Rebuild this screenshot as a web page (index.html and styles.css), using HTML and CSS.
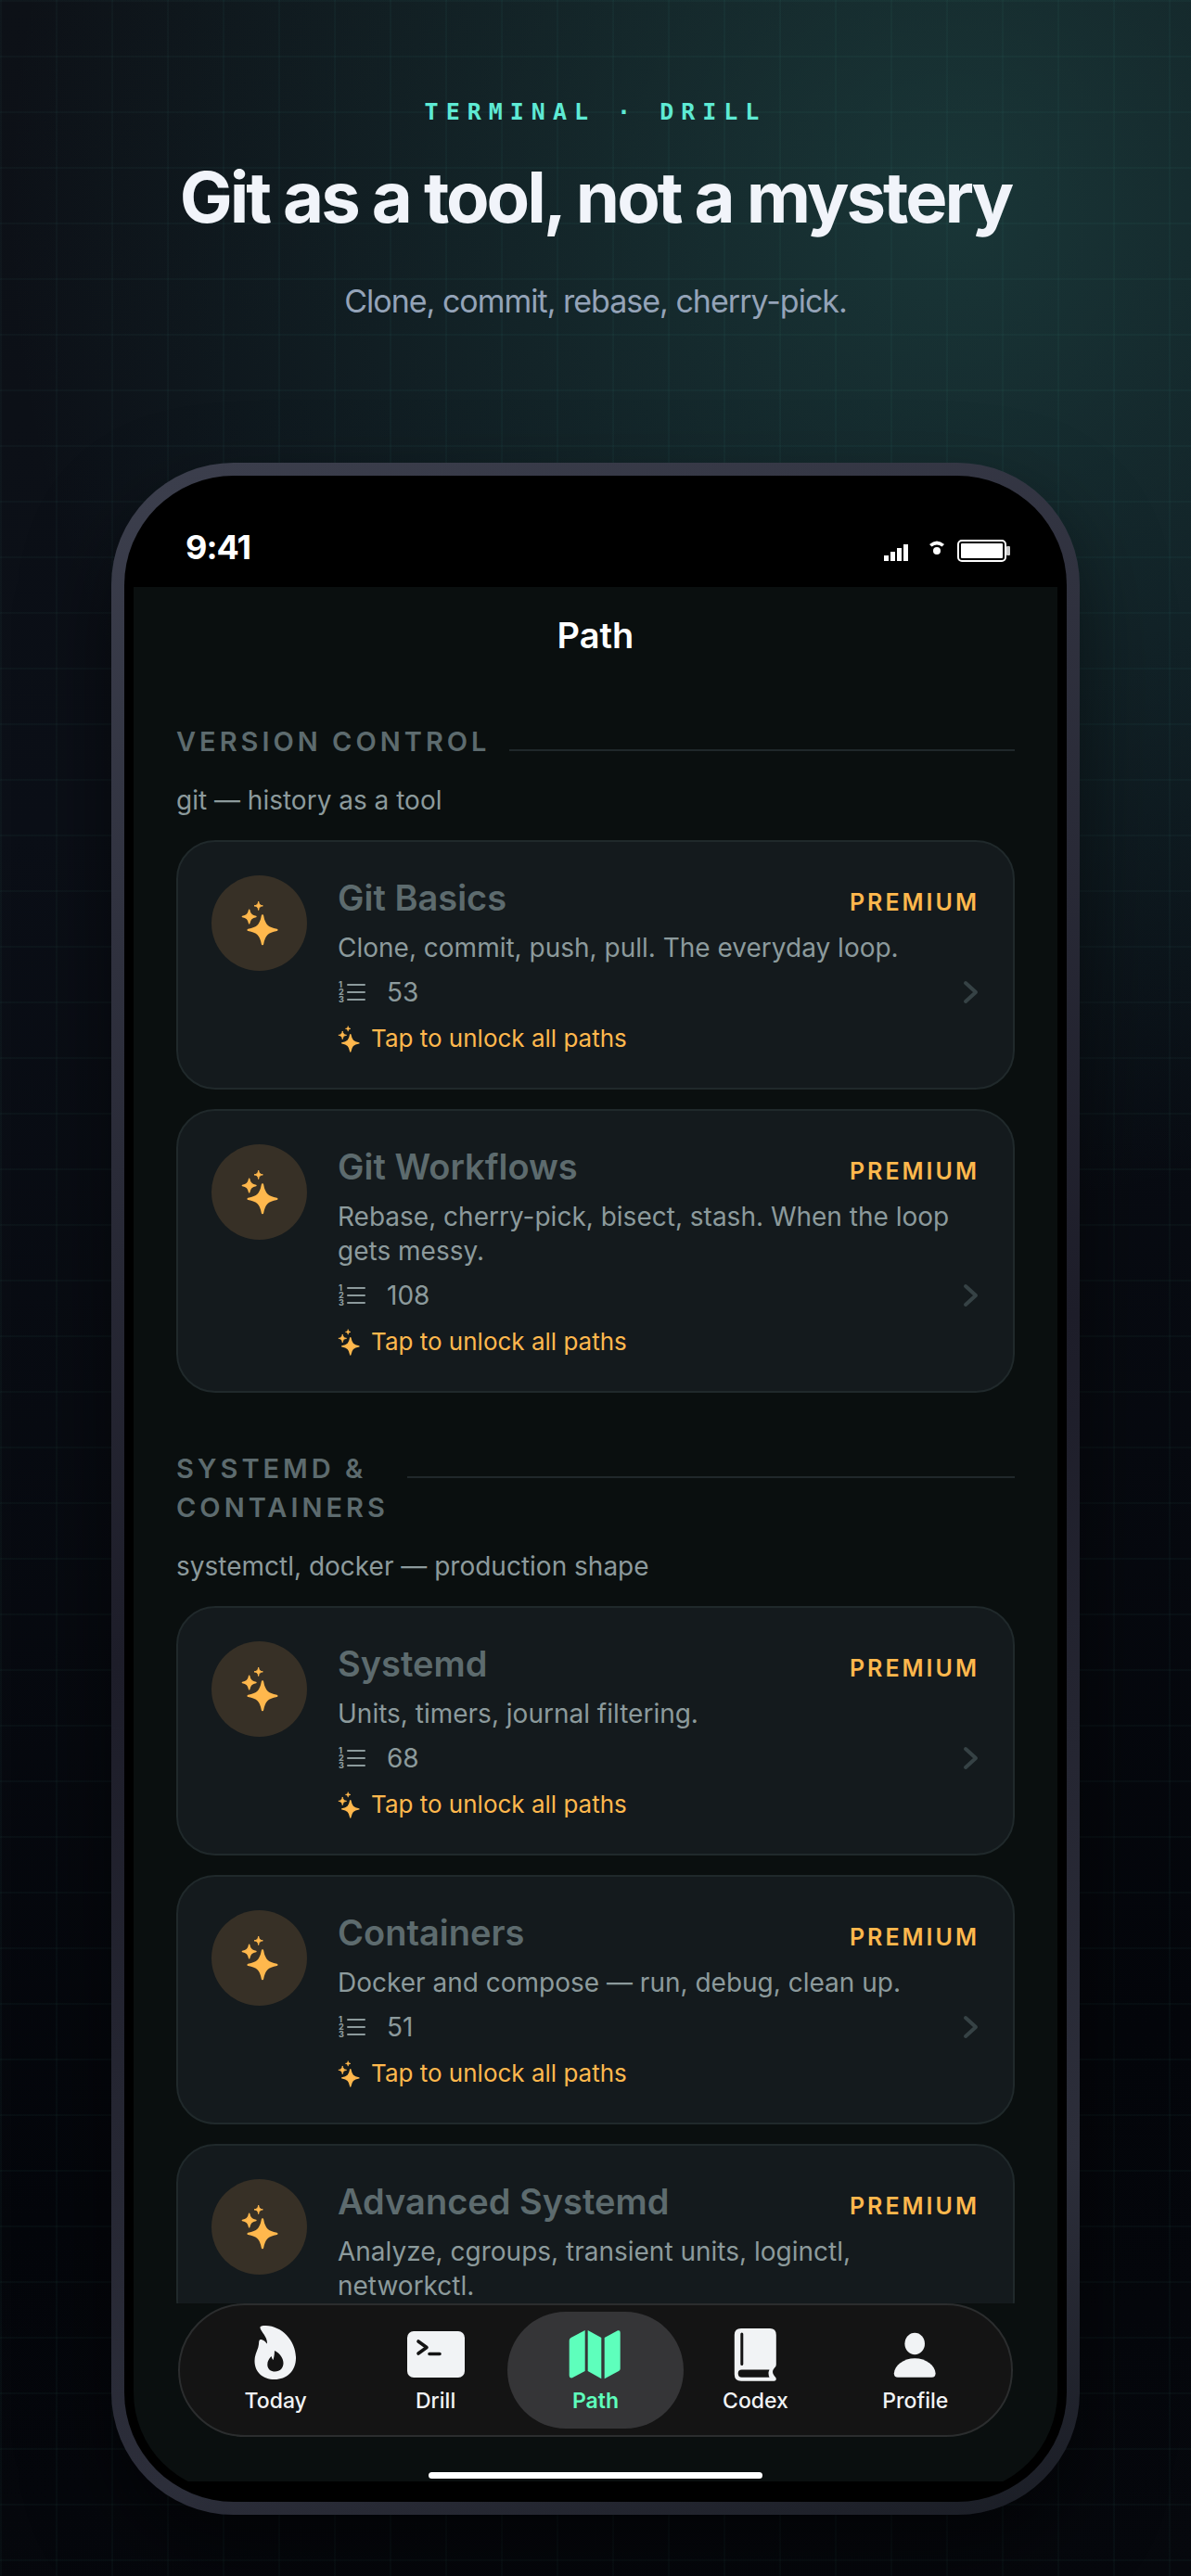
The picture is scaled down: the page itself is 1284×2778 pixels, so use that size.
FILE: index.html
```html
<!DOCTYPE html>
<html lang="en">
  <head>
    <meta charset="UTF-8" />
    <meta name="viewport" content="width=device-width, initial-scale=1.0" />
    <title>Terminal Drill - Path</title>
    <link rel="stylesheet" href="styles.css" />
  </head>
  <body>
    <!-- shared icons -->
    <svg class="sprite" aria-hidden="true">
      <symbol id="sparkles" viewBox="118 93 120 146">
        <g fill="currentColor" stroke="currentColor" stroke-linejoin="round">
          <path stroke-width="7" d="M187 142C192 172 203 183 233 188C203 193 192 204 187 234C182 204 171 193 141 188C171 183 182 172 187 142Z" />
          <path stroke-width="4" d="M144 123C146 137 152 143 166 145C152 147 146 153 144 167C142 153 136 147 122 145C136 143 142 137 144 123Z" />
          <path stroke-width="3" d="M174 96C175 105 179 109 188 110C179 111 175 115 174 124C173 115 169 111 160 110C169 109 173 105 174 96Z" />
        </g>
      </symbol>
      <symbol id="chevron" viewBox="0 0 18 26">
        <path d="M3 3L14 13L3 23" fill="none" stroke="currentColor" stroke-width="4" stroke-linecap="round" stroke-linejoin="round" />
      </symbol>
    </svg>

    <header class="hero">
      <p class="eyebrow">TERMINAL · DRILL</p>
      <h1>Git as a tool, not a mystery</h1>
      <p class="tagline">Clone, commit, rebase, cherry-pick.</p>
    </header>

    <div class="phone">
      <div class="bezel">
        <div class="glass">
          <div class="status-bar">
            <span class="time">9:41</span>
            <div class="status-icons">
              <svg width="28" height="24" viewBox="0 0 28 24" fill="#fff">
                <path d="M0 17h5v6H0zM7 13h5v10H7zM14 9h5v14h-5zM21 5h5v18h-5z" />
              </svg>
              <svg width="18" height="24" viewBox="0 0 18 24" fill="#fff">
                <path d="M1 5Q9 -2 17 5L14.500 7.500Q9 3.500 3.500 7.500Z" />
                <circle cx="9" cy="12" r="4" />
              </svg>
              <svg width="57" height="24" viewBox="0 0 57 24">
                <rect x="1" y="1" width="51" height="22" rx="4" fill="none" stroke="#fff" stroke-width="2" />
                <rect x="4" y="4" width="45" height="16" rx="1" fill="#fff" />
                <rect x="53" y="7" width="4" height="10" rx="1" fill="#ccc" />
              </svg>
            </div>
          </div>

          <main class="screen">
            <div class="list">
              <h2 class="page-title">Path</h2>

              <section>
                <div class="section-head">
                  <h3>VERSION CONTROL</h3>
                  <span class="rule"></span>
                </div>
                <p class="section-note">git — history as a tool</p>

                <a class="card" href="#">
                  <span class="badge"><svg class="badge-icon"><use href="#sparkles" /></svg></span>
                  <div class="card-body">
                    <div class="card-top">
                      <h4>Git Basics</h4>
                      <span class="premium">PREMIUM</span>
                    </div>
                    <p class="desc">Clone, commit, push, pull. The everyday loop.</p>
                    <div class="meta">
                      <svg class="list-icon" viewBox="0 0 30 26">
                        <path d="M11 5H29M11 13H29M11 21H29" />
                        <text x="1" y="8">1</text>
                        <text x="1" y="16">2</text>
                        <text x="1" y="24">3</text>
                      </svg>
                      <span>53</span>
                      <svg class="chevron"><use href="#chevron" /></svg>
                    </div>
                    <div class="unlock">
                      <svg class="unlock-icon"><use href="#sparkles" /></svg>
                      <span>Tap to unlock all paths</span>
                    </div>
                  </div>
                </a>

                <a class="card" href="#">
                  <span class="badge"><svg class="badge-icon"><use href="#sparkles" /></svg></span>
                  <div class="card-body">
                    <div class="card-top">
                      <h4>Git Workflows</h4>
                      <span class="premium">PREMIUM</span>
                    </div>
                    <p class="desc">Rebase, cherry-pick, bisect, stash. When the loop gets messy.</p>
                    <div class="meta">
                      <svg class="list-icon" viewBox="0 0 30 26">
                        <path d="M11 5H29M11 13H29M11 21H29" />
                        <text x="1" y="8">1</text>
                        <text x="1" y="16">2</text>
                        <text x="1" y="24">3</text>
                      </svg>
                      <span>108</span>
                      <svg class="chevron"><use href="#chevron" /></svg>
                    </div>
                    <div class="unlock">
                      <svg class="unlock-icon"><use href="#sparkles" /></svg>
                      <span>Tap to unlock all paths</span>
                    </div>
                  </div>
                </a>
              </section>

              <section>
                <div class="section-head">
                  <h3>SYSTEMD &amp;<br />CONTAINERS</h3>
                  <span class="rule"></span>
                </div>
                <p class="section-note">systemctl, docker — production shape</p>

                <a class="card" href="#">
                  <span class="badge"><svg class="badge-icon"><use href="#sparkles" /></svg></span>
                  <div class="card-body">
                    <div class="card-top">
                      <h4>Systemd</h4>
                      <span class="premium">PREMIUM</span>
                    </div>
                    <p class="desc">Units, timers, journal filtering.</p>
                    <div class="meta">
                      <svg class="list-icon" viewBox="0 0 30 26">
                        <path d="M11 5H29M11 13H29M11 21H29" />
                        <text x="1" y="8">1</text>
                        <text x="1" y="16">2</text>
                        <text x="1" y="24">3</text>
                      </svg>
                      <span>68</span>
                      <svg class="chevron"><use href="#chevron" /></svg>
                    </div>
                    <div class="unlock">
                      <svg class="unlock-icon"><use href="#sparkles" /></svg>
                      <span>Tap to unlock all paths</span>
                    </div>
                  </div>
                </a>

                <a class="card" href="#">
                  <span class="badge"><svg class="badge-icon"><use href="#sparkles" /></svg></span>
                  <div class="card-body">
                    <div class="card-top">
                      <h4>Containers</h4>
                      <span class="premium">PREMIUM</span>
                    </div>
                    <p class="desc">Docker and compose — run, debug, clean up.</p>
                    <div class="meta">
                      <svg class="list-icon" viewBox="0 0 30 26">
                        <path d="M11 5H29M11 13H29M11 21H29" />
                        <text x="1" y="8">1</text>
                        <text x="1" y="16">2</text>
                        <text x="1" y="24">3</text>
                      </svg>
                      <span>51</span>
                      <svg class="chevron"><use href="#chevron" /></svg>
                    </div>
                    <div class="unlock">
                      <svg class="unlock-icon"><use href="#sparkles" /></svg>
                      <span>Tap to unlock all paths</span>
                    </div>
                  </div>
                </a>

                <a class="card" href="#">
                  <span class="badge"><svg class="badge-icon"><use href="#sparkles" /></svg></span>
                  <div class="card-body">
                    <div class="card-top">
                      <h4>Advanced Systemd</h4>
                      <span class="premium">PREMIUM</span>
                    </div>
                    <p class="desc">Analyze, cgroups, transient units, loginctl, networkctl.</p>
                  </div>
                </a>
              </section>
            </div>

            <nav class="tabs">
              <a class="tab" href="#">
                <svg class="tab-icon" viewBox="0 0 66 62">
                  <path fill="currentColor" fill-rule="evenodd" d="M16.500 4.500C16 2.800 18 2 22.500 2C40 2.500 55 18 55 37C55 51 45 60 32 60C19 60 10.500 52 10.500 40C10.500 32 14.500 28 15 22C15.200 17 16 16.500 19 17.500C21.500 18.500 22.500 20 24 21.500C24.500 14 17.500 9 16.500 4.500ZM32 29C32 32 31.500 36 30.500 39C29.500 38 29 36.500 28.500 35C26 38 24.300 40 24.300 44C24.300 49 28 51.500 32.500 51.500C38 51.500 41.500 47.500 41.500 42.500C41.500 37 37 31 32 29Z" />
                </svg>
                <span>Today</span>
              </a>
              <a class="tab" href="#">
                <svg class="tab-icon" viewBox="0 0 66 62">
                  <rect x="2" y="8" width="62" height="50" rx="7" fill="currentColor" />
                  <path d="M14 19L23 25.500L14 32M26 32.500H37" fill="none" stroke="#141414" stroke-width="3.600" stroke-linecap="round" stroke-linejoin="round" />
                </svg>
                <span>Drill</span>
              </a>
              <a class="tab active" href="#">
                <svg class="tab-icon" viewBox="0 0 66 62">
                  <path fill="currentColor" d="M21.700 7V51L8 58.300Q4.700 59 4.700 56V18Q4.700 16.200 6.500 15ZM24.700 7L39.300 15V59.300L24.700 51ZM42.700 15L57 7.300Q59.700 6.500 59.700 9.500V48.500Q59.700 50 58 51L42.700 59.300Z" />
                </svg>
                <span>Path</span>
              </a>
              <a class="tab" href="#">
                <svg class="tab-icon" viewBox="0 0 66 62">
                  <path fill="currentColor" fill-rule="evenodd" d="M18 5H49Q55.800 5 55.800 12V44Q55.800 46 54 47.500Q50 52 54 56.500Q56 58 55.800 60Q55.500 61.700 53.500 61.700H18Q10.800 61.700 10.800 54.500V12Q10.800 5 18 5ZM18.700 49.500Q14.700 49.500 14.700 53.500Q14.700 57.700 18.700 57.700H48.500Q46.500 53.500 48.500 49.500ZM17.300 11V43.500Q17.300 45 18.800 45Q20.300 45 20.300 43.500V11Q20.300 9.500 18.800 9.500Q17.300 9.500 17.300 11Z" />
                </svg>
                <span>Codex</span>
              </a>
              <a class="tab" href="#">
                <svg class="tab-icon" viewBox="0 0 66 62">
                  <ellipse cx="32.200" cy="21.500" rx="10.800" ry="11.800" fill="currentColor" />
                  <path fill="currentColor" d="M14 57.700Q9.800 57.700 9.800 53.500C10.500 45 20 37.300 32.200 37.300C44.500 37.300 54 45 54.600 53.500Q54.600 57.700 50.500 57.700Z" />
                </svg>
                <span>Profile</span>
              </a>
            </nav>
            <div class="home-indicator"></div>
          </main>
        </div>
      </div>
    </div>
  </body>
</html>
```
FILE: styles.css
```css
* {
  box-sizing: border-box;
}

body {
  margin: 0;
  height: 100vh;
  display: flex;
  flex-direction: column;
  font-family: Inter, "Liberation Sans", sans-serif;
  color: #f1f4fa;
  background:
    linear-gradient(rgba(94, 234, 212, 0.03) 2px, transparent 2px) 0 0 / 60px 60px,
    linear-gradient(90deg, rgba(94, 234, 212, 0.03) 2px, transparent 2px) 0 0 / 60px 60px,
    radial-gradient(ellipse 1020px 1080px at 80% 8%, rgba(52, 130, 120, 0.33), transparent),
    linear-gradient(170deg, #0d1117, #0b0f17 30%, #04060b 80%, #06080d);
}

h1, h2, h3, h4, p {
  margin: 0;
}

a {
  color: inherit;
  text-decoration: none;
}

.sprite {
  position: absolute;
  width: 0;
  height: 0;
}

/* headline above the phone */
.hero {
  display: flex;
  flex-direction: column;
  align-items: center;
  padding: 105px 40px 147px;
  text-align: center;
}

.eyebrow {
  font: bold 25px/32px "DejaVu Sans Mono", monospace;
  letter-spacing: 8px;
  color: #5eead4;
}

h1 {
  margin-top: 29px;
  font-size: 76px;
  line-height: 92px;
  font-weight: 700;
  letter-spacing: -3px;
}

.tagline {
  margin-top: 40px;
  font-size: 34px;
  line-height: 54px;
  font-weight: 400;
  letter-spacing: -1px;
  color: #94a3b8;
}

/* phone */
.phone {
  flex: 1;
  min-height: 0;
  display: flex;
  margin: 0 120px 66px;
  padding: 14px;
  border-radius: 132px;
  background: linear-gradient(160deg, #3c3f4d, #1d1d29 50%, #2c2e3a 85%, #1a1d25);
  box-shadow: 0 40px 90px rgba(0, 0, 0, 0.5);
}

.bezel {
  flex: 1;
  display: flex;
  padding: 10px;
  border-radius: 118px;
  background: #000;
}

.glass {
  flex: 1;
  min-width: 0;
  display: flex;
  flex-direction: column;
  padding-bottom: 12px;
  border-radius: 108px;
  overflow: hidden;
}

.status-bar {
  display: flex;
  justify-content: space-between;
  padding: 45px 51px 21px 56px;
}

.time {
  font-size: 36px;
  line-height: 44px;
  font-weight: 700;
  letter-spacing: -1px;
  color: #fff;
}

.status-icons {
  display: flex;
  gap: 13px;
  padding-top: 14px;
}

.status-icons svg:first-child {
  margin-right: 7px;
}

.screen {
  flex: 1;
  min-height: 0;
  display: flex;
  flex-direction: column;
  background: #0a0f0f;
}

.list {
  flex: 1;
  min-height: 0;
  overflow: hidden;
  padding: 28px 46px 0;
}

.page-title {
  margin-bottom: 70px;
  font-size: 38px;
  line-height: 48px;
  font-weight: 600;
  text-align: center;
  color: #fff;
}

section {
  margin-bottom: 61px;
}

.section-head {
  display: flex;
  align-items: flex-start;
  gap: 20px;
}

h3 {
  font-size: 29px;
  line-height: 42px;
  font-weight: 600;
  letter-spacing: 4px;
  color: #5d6b6e;
}

.rule {
  flex: 1;
  height: 2px;
  margin-top: 29px;
  background: #20282b;
}

.section-note {
  margin: 24px 0 25px;
  font-size: 28px;
  line-height: 36px;
  color: #8c9a9c;
}

/* path cards */
.card {
  display: flex;
  gap: 33px;
  padding: 36px 36px 35px;
  border: 2px solid #20292b;
  border-radius: 42px;
  background: #141a1d;
}

.card + .card {
  margin-top: 21px;
}

.badge {
  display: flex;
  flex: none;
  align-items: center;
  justify-content: center;
  width: 103px;
  height: 103px;
  border-radius: 50%;
  background: #373026;
  color: #ffb84d;
}

.badge-icon {
  width: 40px;
  height: 49px;
}

.card-body {
  flex: 1;
  min-width: 0;
}

.card-top {
  display: flex;
  align-items: baseline;
  justify-content: space-between;
}

h4 {
  font-size: 38px;
  line-height: 48px;
  font-weight: 600;
  color: #5d6b6e;
}

.premium {
  font-size: 25px;
  font-weight: 600;
  letter-spacing: 3px;
  color: #ffb84d;
}

.desc {
  margin-top: 12px;
  font-size: 28px;
  line-height: 37px;
  color: #8c9a9c;
}

.meta {
  display: flex;
  align-items: center;
  margin-top: 10px;
  font-size: 28px;
  line-height: 38px;
  color: #8c9a9c;
}

.list-icon {
  width: 30px;
  height: 26px;
  margin-right: 23px;
  fill: currentColor;
  font-size: 9px;
  font-weight: 800;
}

.list-icon path {
  stroke: currentColor;
  stroke-width: 2px;
  stroke-linecap: round;
}

.chevron {
  width: 18px;
  height: 26px;
  margin-left: auto;
  color: #364245;
}

.unlock {
  display: flex;
  align-items: center;
  gap: 12px;
  margin-top: 13px;
  font-size: 26px;
  line-height: 36px;
  color: #ffb84d;
}

.unlock-icon {
  width: 24px;
  height: 29px;
}

/* bottom tabs */
.tabs {
  display: flex;
  margin: 0 48px;
  padding: 7px 17px;
  border: 2px solid #2b2d2e;
  border-radius: 72px;
  background: #141414;
}

.tab {
  flex: 1;
  display: flex;
  flex-direction: column;
  align-items: center;
  gap: 6px;
  padding: 13px 0 15px;
  font-size: 23px;
  line-height: 30px;
  font-weight: 500;
  color: #f1f3f5;
}

.tab-icon {
  width: 66px;
  height: 62px;
}

.tab.active {
  margin: 0 -9px;
  padding-left: 9px;
  padding-right: 9px;
  border-radius: 63px;
  background: #353537;
  color: #5effbc;
  font-weight: 600;
}

.home-indicator {
  width: 360px;
  height: 7px;
  margin: 38px auto 3px;
  border-radius: 4px;
  background: #fff;
}
```
